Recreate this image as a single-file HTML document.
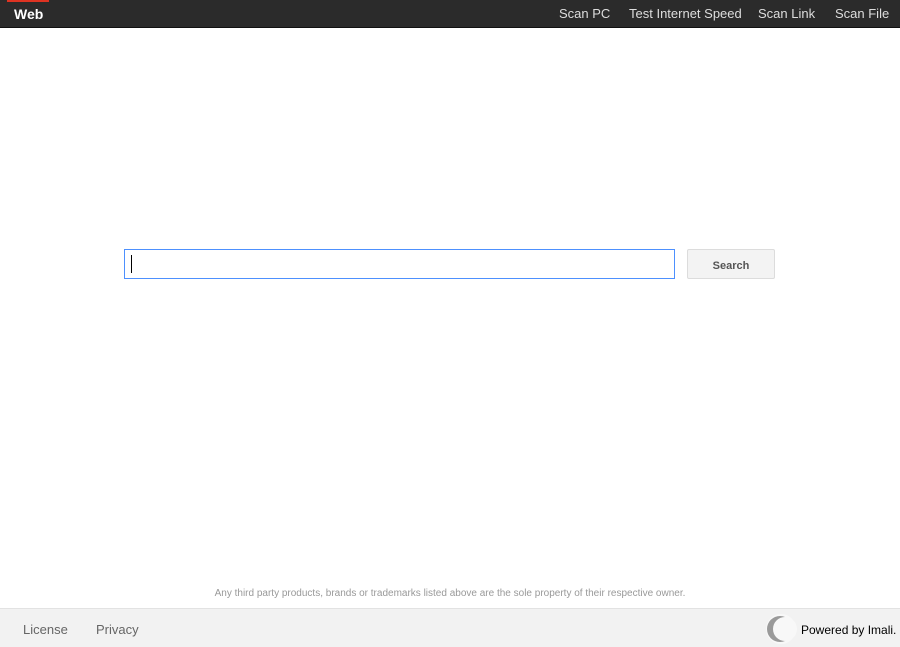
<!DOCTYPE html>
<html><head><style>
body{margin:0;width:900px;height:646px;position:relative;background:#fff;font-family:"Liberation Sans",Arial,sans-serif;overflow:hidden}
.hdr{position:absolute;left:0;top:0;width:900px;height:27px;background:#2b2b2b;border-bottom:1px solid #111}
.red{position:absolute;left:7px;top:0;width:42px;height:2px;background:#dd3322}
.web{position:absolute;left:14px;top:6px;color:#fff;font-weight:bold;font-size:14px}
.nav{position:absolute;top:6px;color:#ddd;font-size:13px}
.inp{position:absolute;left:124px;top:249px;width:549px;height:28px;border:1px solid #4d90fe;box-sizing:content-box}
.cur{position:absolute;left:131px;top:255px;width:1px;height:18px;background:#000}
.btn{position:absolute;left:687px;top:249px;width:86px;height:28px;border:1px solid #dcdcdc;background:#f3f3f3;border-radius:2px;font-size:11px;font-weight:bold;color:#555;text-align:center;line-height:33px}
.disc{position:absolute;left:0;width:900px;top:588px;text-align:center;font-size:10px;color:#999}
.ftr{position:absolute;left:0;top:608px;width:900px;height:38px;background:#f2f2f2;border-top:1px solid #e2e2e2}
.fl{position:absolute;top:13px;font-size:13px;color:#666}
</style></head><body>
<div class="hdr"><div class="red"></div><div class="web">Web</div>
<span class="nav" style="left:559px">Scan PC</span>
<span class="nav" style="left:629px">Test Internet Speed</span>
<span class="nav" style="left:758px">Scan Link</span>
<span class="nav" style="left:835px">Scan File</span></div>
<div class="inp"></div><div class="cur"></div>
<div class="btn">Search</div>
<div class="disc">Any third party products, brands or trademarks listed above are the sole property of their respective owner.</div>
<div class="ftr">
<span class="fl" style="left:23px">License</span>
<span class="fl" style="left:96px">Privacy</span>
<svg style="position:absolute;left:765px;top:5px" width="32" height="30" viewBox="0 0 32 30"><circle cx="16" cy="15" r="15" fill="#f8f8f8"/><circle cx="15" cy="15" r="13" fill="#9a9a9a"/><circle cx="20" cy="15" r="12" fill="#f8f8f8"/></svg>
<span style="position:absolute;left:801px;top:14px;font-size:12px;color:#000">Powered by Imali.</span>
</div>
</body></html>
